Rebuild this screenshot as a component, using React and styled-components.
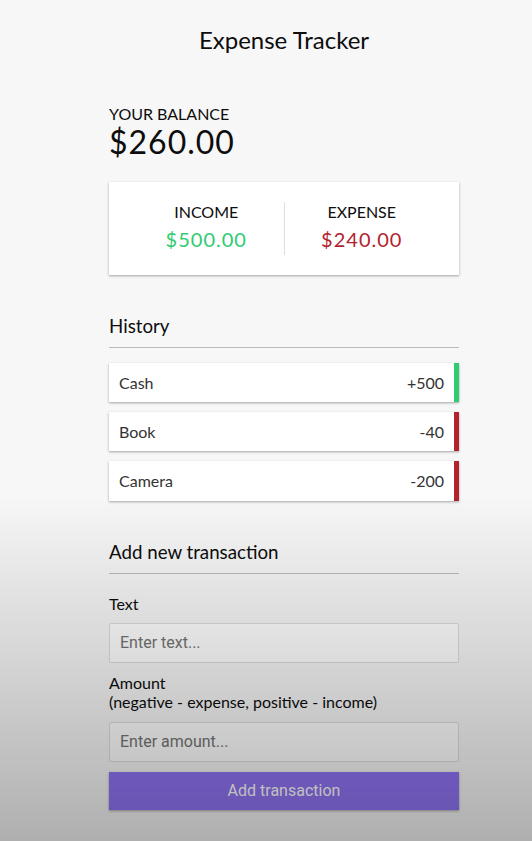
import React from 'react'
import styled, { createGlobalStyle } from 'styled-components'

const GlobalStyle = createGlobalStyle`
	* { box-sizing: border-box; }
	body {
		margin: 0; background-color: #f7f7f7; color: #0d0d0d;
		font-family: 'Lato', 'Open Sans', sans-serif;
	}
`

const shadow = '0 1px 3px rgba(0,0,0,0.12), 0 1px 2px rgba(0,0,0,0.24)'
const green = '#2ecc71'
const red = '#b3232e'

const Page = styled.div`
	display: flex; justify-content: center; padding-left: 36px; min-height: 100vh;
`
const Container = styled.div`
	width: 350px; padding: 26px 0 30px;
`
const Title = styled.h2`
	font-size: 24px; font-weight: 400; text-align: center; margin: 0 0 49px; line-height: 1.2;
`
const Caption = styled.h4`
	font-size: 16px; font-weight: 400; text-transform: uppercase; margin: 0; line-height: 1.2;
`
const Balance = styled.h1`
	font-size: 32px; font-weight: 400; letter-spacing: 1px; margin: 0; line-height: 1.2;
`
const IncExp = styled.div`
	background-color: #fff; box-shadow: ${ shadow }; padding: 20px; display: flex; margin: 21px 0 20px;
`
const IncExpCol = styled.div`
	flex: 1; text-align: center;
	&:first-of-type { border-right: 1px solid #dedede; }
`
const Money = styled.p`
	font-size: 20px; letter-spacing: 1px; margin: 5px 0 4px; line-height: 1.2;
	color: ${ p => p.$plus ? green : red };
`
const Heading = styled.h3`
	font-size: 18.72px; font-weight: 400; line-height: 1.2; border-bottom: 1px solid #bbb;
	padding-bottom: 10px; margin: 40px 0 10px;
`
const List = styled.ul`
	list-style-type: none; padding: 0; margin: 15px 0 40px;
`
const Item = styled.li`
	background-color: #fff; box-shadow: ${ shadow }; color: #333; display: flex;
	justify-content: space-between; padding: 10px; margin: 0 0 10px; line-height: 1.2;
	font-size: 16px;
	border-right: 5px solid ${ p => p.$plus ? green : red };
	&:last-child { margin-bottom: 0; }
`
const Field = styled.div``
const Label = styled.label`
	display: inline-block; margin: 10px 0; font-size: 16px; line-height: 1.2;
`
const Input = styled.input`
	border: 1px solid #dedede; border-radius: 2px; display: block; font-size: 16px;
	padding: 10px; width: 100%; background: #fff; font-family: 'Roboto', 'Liberation Sans', sans-serif;
	line-height: 18px;
	&::placeholder { color: #757575; }
`
const Button = styled.button`
	background-color: #9074f5; box-shadow: ${ shadow }; color: #fff; border: 0; display: block;
	font-size: 16px; margin: 10px 0 30px; padding: 10px; width: 100%;
	font-family: 'Roboto', 'Liberation Sans', sans-serif; line-height: 18px;
`
const Shade = styled.div`
	position: fixed; inset: 0; pointer-events: none;
	background: linear-gradient(to bottom, rgba(0,0,0,0) 59%, rgba(0,0,0,0.29) 100%);
`

const items = [
	{ text: 'Cash', amount: '+500', plus: true },
	{ text: 'Book', amount: '-40' },
	{ text: 'Camera', amount: '-200' },
]

const App = () => {
	return (
		<>
			<GlobalStyle />
			<Page>
				<Container>
					<Title>Expense Tracker</Title>
					<Caption>Your Balance</Caption>
					<Balance>$260.00</Balance>
					<IncExp>
						<IncExpCol>
							<Caption>Income</Caption>
							<Money $plus>$500.00</Money>
						</IncExpCol>
						<IncExpCol>
							<Caption>Expense</Caption>
							<Money>$240.00</Money>
						</IncExpCol>
					</IncExp>
					<Heading>History</Heading>
					<List>
						{ items.map(v => (
							<Item key={ v.text } $plus={ v.plus }>
								{ v.text } <span>{ v.amount }</span>
							</Item>
						)) }
					</List>
					<Heading>Add new transaction</Heading>
					<form onSubmit={ e => e.preventDefault() }>
						<Field>
							<Label htmlFor="text">Text</Label>
							<Input type="text" id="text" placeholder="Enter text..." />
						</Field>
						<Field>
							<Label htmlFor="amount">Amount <br />(negative - expense, positive - income)</Label>
							<Input type="number" id="amount" placeholder="Enter amount..." />
						</Field>
						<Button>Add transaction</Button>
					</form>
				</Container>
			</Page>
			<Shade />
		</>
	);
}

export default App;
